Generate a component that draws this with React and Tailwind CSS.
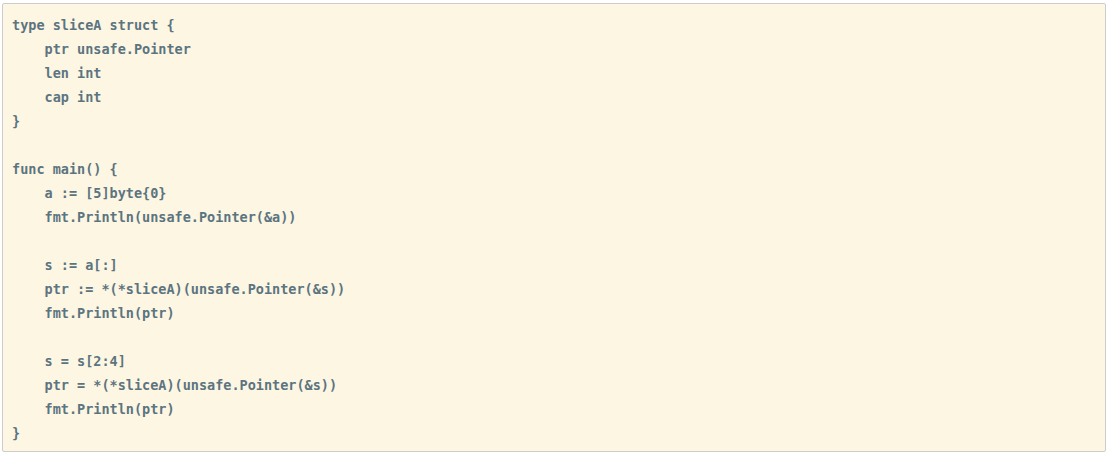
const code = `type sliceA struct {
    ptr unsafe.Pointer
    len int
    cap int
}

func main() {
    a := [5]byte{0}
    fmt.Println(unsafe.Pointer(&a))

    s := a[:]
    ptr := *(*sliceA)(unsafe.Pointer(&s))
    fmt.Println(ptr)

    s = s[2:4]
    ptr = *(*sliceA)(unsafe.Pointer(&s))
    fmt.Println(ptr)
}`

function App() {
    return (
        <div className="pt-[3px] pl-[2px] bg-white min-h-screen">
            <pre className="w-[1104px] h-[449px] border border-[#cccccc] rounded-[2px] bg-[#fdf6e3] pl-[9px] pt-[9px] text-[#5b7480] font-bold text-[13.5px] leading-[24px] font-['DejaVu_Sans_Mono',monospace]">
                {code}
            </pre>
        </div>
    )
}

export default App;
